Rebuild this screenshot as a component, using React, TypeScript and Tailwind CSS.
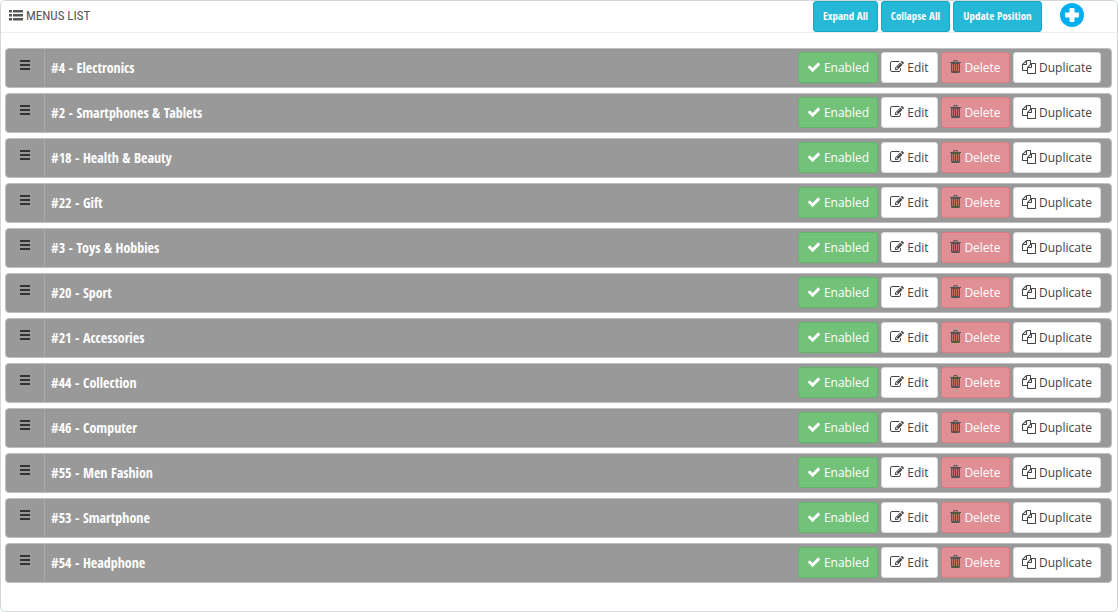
import type { ReactNode } from 'react';

const MENUS = [
  { id: 4, name: 'Electronics' },
  { id: 2, name: 'Smartphones & Tablets' },
  { id: 18, name: 'Health & Beauty' },
  { id: 22, name: 'Gift' },
  { id: 3, name: 'Toys & Hobbies' },
  { id: 20, name: 'Sport' },
  { id: 21, name: 'Accessories' },
  { id: 44, name: 'Collection' },
  { id: 46, name: 'Computer' },
  { id: 55, name: 'Men Fashion' },
  { id: 53, name: 'Smartphone' },
  { id: 54, name: 'Headphone' },
];

const ICONS = {
  check:
    'M1671 566q0 40-28 68l-724 724-136 136q-28 28-68 28t-68-28l-136-136-362-362q-28-28-28-68t28-68l136-136q28-28 68-28t68 28l294 295 656-657q28-28 68-28t68 28l136 136q28 28 28 68z',
  edit: 'M888 1184l116-116-152-152-116 116v56h96v96h56zm440-720q-16-16-33 1l-350 350q-17 17-1 33t33-1l350-350q17-17 1-33zm80 594v190q0 119-84.5 203.5t-203.5 84.5h-832q-119 0-203.5-84.5t-84.5-203.5v-832q0-119 84.5-203.5t203.5-84.5h832q63 0 117 25 15 7 18 23 3 17-9 29l-49 49q-14 14-32 8-23-6-45-6h-832q-66 0-113 47t-47 113v832q0 66 47 113t113 47h832q66 0 113-47t47-113v-126q0-13 9-22l64-64q15-15 35-7t20 29zm-96-738l288 288-672 672h-288v-288zm444 132l-92 92-288-288 92-92q28-28 68-28t68 28l152 152q28 28 28 68t-28 68z',
  copy: 'M1696 384q40 0 68 28t28 68v1216q0 40-28 68t-68 28h-960q-40 0-68-28t-28-68v-288h-544q-40 0-68-28t-28-68v-672q0-40 20-88t48-76l408-408q28-28 76-48t88-20h416q40 0 68 28t28 68v328q68-40 128-40h416zm-544 213l-299 299h299v-299zm-640-384l-299 299h299v-299zm196 647l316-316v-416h-384v416q0 40-28 68t-68 28h-416v640h512v-256q0-40 20-88t48-76zm956 804v-1152h-384v416q0 40-28 68t-68 28h-416v640h896z',
};

const condensed = "font-['Ubuntu_Condensed','Open_Sans_Condensed',Lato,sans-serif]";
const condensedRegular = "font-['Ubuntu_Condensed','Roboto_Condensed',Lato,sans-serif]";

function Icon({ name }: { name: keyof typeof ICONS }) {
  return (
    <svg viewBox="0 0 1792 1792" className="mb-0.5 size-3.5 shrink-0 fill-current" aria-hidden="true">
      <path d={ICONS[name]} />
    </svg>
  );
}

function TrashIcon() {
  return (
    <svg viewBox="0 0 11 14" className="mb-0.5 h-3.5 w-[11px] shrink-0 text-[#555]" aria-hidden="true">
      <path d="M2 3h7v9H2z" fill="#c0705f" />
      <path
        d="M0 2h3l.7-1.5Q4 0 4.500 0h2q.5 0 .8.500L8 2h3v1h-1v8.500q0 1.500-1.500 1.500h-6Q1 13 1 11.500V3H0zM4.200 2h2.600l-.4-1H4.600zM2 4v7h1V4zM4 4v7h1V4zM6 4v7h1V4zM8 4v7h1V4z"
        fill="currentColor"
        fillRule="evenodd"
      />
    </svg>
  );
}

function ListIcon() {
  return (
    <svg viewBox="0 0 14 12" className="h-3 w-3.5 shrink-0 fill-current" aria-hidden="true">
      {[0, 4, 8].map((y) => (
        <path key={y} d={`M0 ${y}h3v2.500H0zM4 ${y}h10v2.500H4z`} />
      ))}
    </svg>
  );
}

function HeaderButton({ className, children }: { className: string; children: ReactNode }) {
  return (
    <button
      type="button"
      className={`h-[31px] shrink-0 rounded-[3px] border border-[#1ba6c4] bg-[#25b9d7] text-center text-[11px] font-bold whitespace-nowrap text-white ${condensed} ${className}`}
    >
      {children}
    </button>
  );
}

function RowButton({ className, children }: { className: string; children: ReactNode }) {
  return (
    <button
      type="button"
      className={`flex h-[31px] shrink-0 items-center justify-center gap-[3px] rounded-[3px] border text-xs ${className}`}
    >
      {children}
    </button>
  );
}

function MenuRow({ id, name }: { id: number; name: string }) {
  return (
    <li className="flex h-10 items-stretch overflow-hidden rounded-[4px] border border-[#bfbfbf] bg-[#999]">
      <button
        type="button"
        aria-label={`Move ${name}`}
        className="flex w-[39px] shrink-0 cursor-move items-start justify-center border-r border-[#aaa] pt-[11px] text-[#333]"
      >
        <svg viewBox="0 0 10 10" className="size-2.5 fill-current" aria-hidden="true">
          <path d="M0 0h10v2H0zM0 4h10v2H0zM0 8h10v2H0z" />
        </svg>
      </button>
      <span className={`flex flex-1 items-center pl-1.5 text-sm font-bold text-white ${condensed}`}>
        #{id} - {name}
      </span>
      <div className="flex items-start gap-[3px] pt-[3px] pr-2.5">
        <RowButton className="w-20 border-[#5fb867] bg-[#72c279] text-white">
          <Icon name="check" />
          Enabled
        </RowButton>
        <RowButton className="w-[57px] border-[#ddd] bg-white text-[#444]">
          <Icon name="edit" />
          Edit
        </RowButton>
        <RowButton className="w-[69px] border-[#dc7b82] bg-[#e08f95] text-white">
          <TrashIcon />
          Delete
        </RowButton>
        <RowButton className="w-[88px] border-[#ddd] bg-white text-[#444]">
          <Icon name="copy" />
          Duplicate
        </RowButton>
      </div>
    </li>
  );
}

export default function App() {
  return (
    <section className="min-h-screen rounded-[5px] border border-[#d3d8db] bg-white font-['Open_Sans',sans-serif]">
      <header className="flex h-8 items-start border-b border-[#eee] pr-[33px]">
        <h1 className={`flex h-[30px] flex-1 items-center gap-[3px] pl-2 text-[13px] text-[#555] ${condensedRegular}`}>
          <ListIcon />
          MENUS LIST
        </h1>
        <div className="flex gap-[3px]">
          <HeaderButton className="w-[65px]">Expand All</HeaderButton>
          <HeaderButton className="w-[69px]">Collapse All</HeaderButton>
          <HeaderButton className="w-[89px]">Update Position</HeaderButton>
        </div>
        <button type="button" aria-label="Add menu" className="mt-0.5 ml-[18px] shrink-0">
          <svg viewBox="0 0 24 24" className="size-6" aria-hidden="true">
            <circle cx="12" cy="12" r="12" fill="#00aff0" />
            <path d="M10 5.500h4V10h4.500v4H14v4.500h-4V14H5.500v-4H10z" fill="#fff" stroke="#fff" strokeLinejoin="round" />
          </svg>
        </button>
      </header>
      <ul className="flex flex-col gap-[5px] pt-[15px] pr-[5px] pb-7 pl-1">
        {MENUS.map((menu) => (
          <MenuRow key={menu.id} id={menu.id} name={menu.name} />
        ))}
      </ul>
    </section>
  );
}
